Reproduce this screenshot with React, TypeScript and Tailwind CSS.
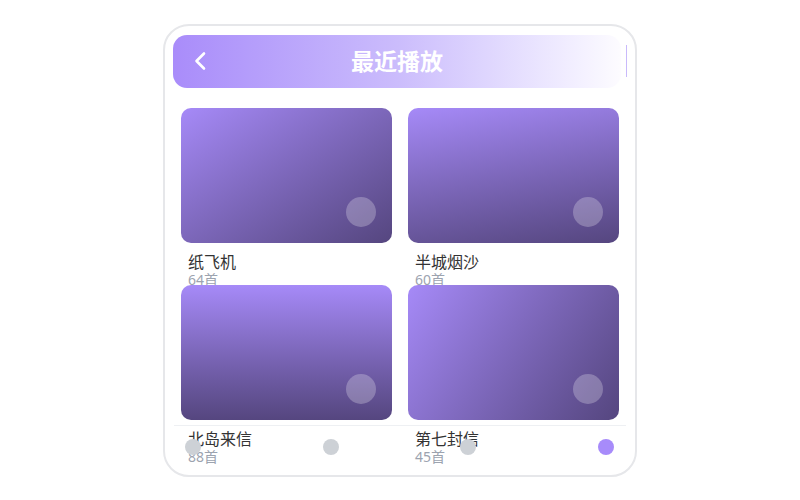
const albums = [
  { name: "纸飞机", count: 64, bg: "bg-linear-to-br" },
  { name: "半城烟沙", count: 60, bg: "bg-linear-170" },
  { name: "北岛来信", count: 88, bg: "bg-linear-to-b" },
  { name: "第七封信", count: 45, bg: "bg-linear-125" },
];

const tabs = [false, false, false, true];

function BackIcon() {
  return (
    <svg width="14" height="20" viewBox="0 0 14 20" fill="none">
      <path
        d="M11 2.5 L3.5 10 L11 17.5"
        stroke="white"
        strokeWidth="2.6"
        strokeLinecap="round"
        strokeLinejoin="round"
      />
    </svg>
  );
}

export default function App() {
  return (
    <div
      className="flex h-[500px] w-[800px] items-center justify-center bg-white"
      style={{ fontFamily: '"Noto Sans", "Noto Sans CJK SC", sans-serif' }}
    >
      <div className="relative h-[453px] w-[474px] overflow-hidden rounded-[26px] border-2 border-[#e6e7ea] bg-white px-[7px] pt-[9px]">
        {/* header */}
        <div className="ml-px flex items-center">
          <div className="relative flex h-[53px] flex-1 items-center rounded-[14px] bg-linear-to-r from-[#a98cfa] via-[#cbbcfc] to-[#fdfcff] px-[20px]">
            <BackIcon />
            <p className="absolute inset-x-0 text-center text-[23px] font-bold text-white">
              最近播放
            </p>
          </div>
          <div className="ml-[5px] mr-px h-[32px] w-px bg-[#c9bafb]" />
        </div>

        {/* album grid */}
        <div className="mt-[20px] grid grid-cols-[211px_211px] gap-x-4 pl-[9px]">
          {albums.map((a) => (
            <div key={a.name} className="h-[177px]">
              <div
                className={`relative h-[135px] rounded-[10px] from-[#a68af8] to-[#55467f] ${a.bg}`}
              >
                <div className="absolute bottom-4 right-4 h-[30px] w-[30px] rounded-full bg-white/25" />
              </div>
              <p className="mt-[9px] pl-[7px] text-[16px] leading-[20px] text-[#333]">
                {a.name}
              </p>
              <p className="pl-[7px] text-[14px] leading-[16px] text-[#9ca3af]">
                {a.count}首
              </p>
            </div>
          ))}
        </div>

        {/* bottom tab bar */}
        <div className="absolute inset-x-[9px] bottom-0 h-[50px] border-t border-[#eef0f3]">
          <div className="mt-[13px] flex justify-between pl-[11px] pr-[12px]">
            {tabs.map((active, i) => (
              <span
                key={i}
                className={
                  active
                    ? "h-4 w-4 rounded-full bg-[#a78bfa]"
                    : "h-4 w-4 rounded-full bg-[#cdd1d6]"
                }
              />
            ))}
          </div>
        </div>
      </div>
    </div>
  );
}
